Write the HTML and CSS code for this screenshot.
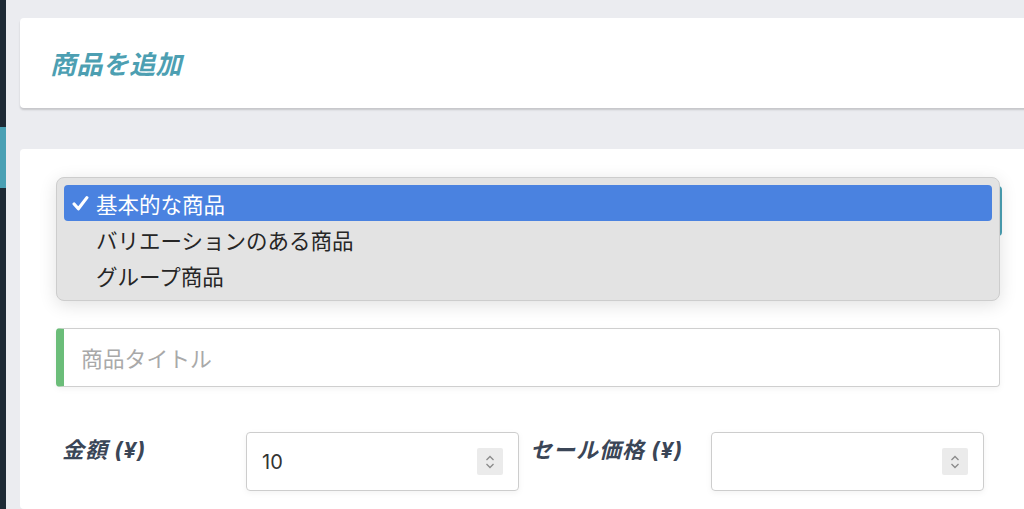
FILE: index.html
```html
<!DOCTYPE html>
<html lang="ja">
<head>
<meta charset="utf-8">
<title>商品を追加</title>
<link rel="stylesheet" href="styles.css">
</head>
<body>
<div class="app">
  <aside class="sidebar">
    <div class="sidebar-active"></div>
  </aside>
  <main class="main">
    <section class="card header-card">
      <h1 class="page-title">商品を追加</h1>
    </section>
    <section class="card form-card">
      <div class="type-select">
        <div class="select-box"></div>
        <ul class="select-popup">
          <li class="option selected">
            <svg class="check" width="17" height="17" viewBox="0 0 16 16"><polyline points="2,8.5 6,13 14,2.5" fill="none" stroke="#fff" stroke-width="3" stroke-linecap="round" stroke-linejoin="round"/></svg>
            <span>基本的な商品</span>
          </li>
          <li class="option"><span>バリエーションのある商品</span></li>
          <li class="option"><span>グループ商品</span></li>
        </ul>
      </div>
      <div class="title-input">商品タイトル</div>
      <div class="price-row">
        <label class="price-label">金額 (¥)</label>
        <div class="num-input">
          <span class="num-value">10</span>
          <span class="spinner"><svg width="12" height="18" viewBox="0 0 12 18"><polyline points="2.5,7 6,3.5 9.5,7" fill="none" stroke="#8a8a8a" stroke-width="1.3"/><polyline points="2.5,11 6,14.5 9.5,11" fill="none" stroke="#8a8a8a" stroke-width="1.3"/></svg></span>
        </div>
        <label class="price-label sale">セール価格 (¥)</label>
        <div class="num-input">
          <span class="num-value"></span>
          <span class="spinner"><svg width="12" height="18" viewBox="0 0 12 18"><polyline points="2.5,7 6,3.5 9.5,7" fill="none" stroke="#8a8a8a" stroke-width="1.3"/><polyline points="2.5,11 6,14.5 9.5,11" fill="none" stroke="#8a8a8a" stroke-width="1.3"/></svg></span>
        </div>
      </div>
    </section>
  </main>
</div>
</body>
</html>
```
FILE: styles.css
```css
* { box-sizing: border-box; }
html, body { margin: 0; padding: 0; }
body {
  width: 1024px;
  height: 509px;
  overflow: hidden;
  background: #ebecf0;
  font-family: "Inter", "Noto Sans CJK JP", sans-serif;
}
.app {
  display: flex;
  height: 509px;
  overflow: hidden;
}
.sidebar {
  width: 6px;
  flex: none;
  background: #1e2a35;
  padding-top: 127px;
}
.sidebar-active {
  height: 61px;
  background: #4aa0b4;
}
.main {
  flex: 1;
  padding: 18px 0 0 14px;
  margin-right: -20px;
}
.card {
  background: #fff;
  border-radius: 4px;
}
.header-card {
  height: 90px;
  box-shadow: 0 2px 2px rgba(0, 0, 0, 0.16);
  padding: 28px 0 0 30px;
  margin-bottom: 41px;
}
.page-title {
  margin: 0;
  font-family: "Noto Sans CJK JP", sans-serif;
  font-size: 26px;
  font-weight: 700;
  font-style: italic;
  line-height: 34px;
  color: #4d9fb2;
  letter-spacing: 0.4px;
}
.form-card {
  height: 360px;
  padding: 28px 0 0 36px;
}
.type-select {
  position: relative;
  width: 946px;
  height: 124px;
  padding-top: 9px;
}
.select-box {
  width: 946px;
  height: 50px;
  border-right: 2px solid #4aa0b4;
  border-radius: 4px;
}
.select-popup {
  position: absolute;
  top: 0;
  left: 0;
  width: 944px;
  height: 124px;
  margin: 0;
  padding: 7px 7px;
  list-style: none;
  background: #e3e3e3;
  border: 1px solid #cdcdcd;
  border-radius: 8px;
  box-shadow: 0 4px 18px rgba(0, 0, 0, 0.12);
}
.option {
  height: 36px;
  display: flex;
  align-items: center;
  padding-left: 32px;
  font-family: "Noto Sans CJK JP", sans-serif;
  font-size: 21.5px;
  color: #262626;
  position: relative;
}
.option.selected {
  background: #4a82e0;
  color: #fff;
  border-radius: 4px;
}
.check {
  position: absolute;
  left: 8px;
  top: 10px;
}
.title-input {
  margin-top: 27px;
  width: 944px;
  height: 59px;
  border: 1px solid #cfcfcf;
  border-left: 8px solid #6bbd79;
  border-radius: 4px;
  padding-left: 17px;
  display: flex;
  align-items: center;
  font-family: "Noto Sans CJK JP", sans-serif;
  font-size: 21.8px;
  color: #a9a9a9;
  box-shadow: 0 2px 6px rgba(0, 0, 0, 0.05);
}
.price-row {
  margin-top: 45px;
  display: grid;
  grid-template-columns: 190px 273px 192px 273px;
  align-items: start;
}
.price-label {
  padding: 3px 0 0 6px;
  font-family: "Inter", "Noto Sans CJK JP", sans-serif;
  font-size: 22px;
  font-weight: 700;
  font-style: italic;
  color: #3b4657;
  line-height: 30px;
  letter-spacing: 1px;
}
.price-label.sale {
  padding-left: 11px;
}
.num-input {
  height: 59px;
  border: 1px solid #cdcdcd;
  border-radius: 4px;
  display: flex;
  align-items: center;
  justify-content: space-between;
  padding: 0 15px 0 15px;
  box-shadow: 0 2px 6px rgba(0, 0, 0, 0.05);
}
.num-value {
  font-family: "Inter", sans-serif;
  font-size: 20px;
  color: #333;
}
.spinner {
  width: 26px;
  height: 27px;
  background: #ebebeb;
  border-radius: 2px;
  display: flex;
  align-items: center;
  justify-content: center;
}
```
